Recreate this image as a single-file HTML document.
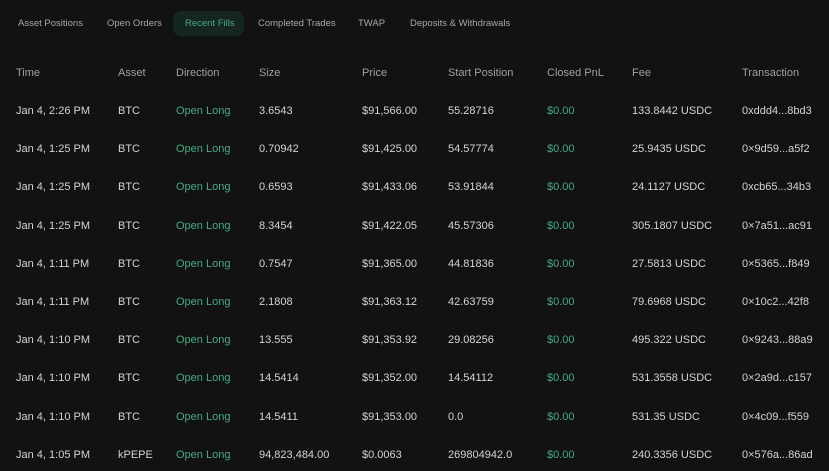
<!DOCTYPE html><html><head><style>
body{margin:0;width:829px;height:471px;background:#121212;font-family:"Liberation Sans",sans-serif;overflow:hidden;position:relative}
.t{position:absolute;font-size:9.5px;color:#a8a8a8;top:18px}
.pill{position:absolute;left:173px;top:11px;width:71px;height:25px;border-radius:8px;background:#15251f}
.c{position:absolute;font-size:11px;white-space:nowrap}
.h{color:#a0a0a0;top:67px}
.d{color:#d4d4d4}
.g{color:#4aaa82}
</style></head><body>
<div class="pill"></div>
<div class="t" style="left:18px">Asset Positions</div>
<div class="t" style="left:107px">Open Orders</div>
<div class="t" style="left:185px;color:#4aaa82">Recent Fills</div>
<div class="t" style="left:258px">Completed Trades</div>
<div class="t" style="left:358px">TWAP</div>
<div class="t" style="left:410px">Deposits &amp; Withdrawals</div>
<div id="r"></div>
<script>
var X=[16,118,176,259,362,448,547,632,742];
var H=["Time","Asset","Direction","Size","Price","Start Position","Closed PnL","Fee","Transaction"];
var R=[["Jan 4, 2:26 PM","BTC","3.6543","$91,566.00","55.28716","133.8442 USDC","0xddd4...8bd3"],
["Jan 4, 1:25 PM","BTC","0.70942","$91,425.00","54.57774","25.9435 USDC","0×9d59...a5f2"],
["Jan 4, 1:25 PM","BTC","0.6593","$91,433.06","53.91844","24.1127 USDC","0xcb65...34b3"],
["Jan 4, 1:25 PM","BTC","8.3454","$91,422.05","45.57306","305.1807 USDC","0×7a51...ac91"],
["Jan 4, 1:11 PM","BTC","0.7547","$91,365.00","44.81836","27.5813 USDC","0×5365...f849"],
["Jan 4, 1:11 PM","BTC","2.1808","$91,363.12","42.63759","79.6968 USDC","0×10c2...42f8"],
["Jan 4, 1:10 PM","BTC","13.555","$91,353.92","29.08256","495.322 USDC","0×9243...88a9"],
["Jan 4, 1:10 PM","BTC","14.5414","$91,352.00","14.54112","531.3558 USDC","0×2a9d...c157"],
["Jan 4, 1:10 PM","BTC","14.5411","$91,353.00","0.0","531.35 USDC","0×4c09...f559"],
["Jan 4, 1:05 PM","kPEPE","94,823,484.00","$0.0063","269804942.0","240.3356 USDC","0×576a...86ad"]];
var s="";
H.forEach(function(h,i){s+='<div class="c h" style="left:'+X[i]+'px">'+h+'</div>'});
R.forEach(function(r,j){var y=105+j*38.2;
var v=[r[0],r[1],"Open Long",r[2],r[3],r[4],"$0.00",r[5],r[6]];
v.forEach(function(t,i){s+='<div class="c '+((i==2||i==6)?'g':'d')+'" style="left:'+X[i]+'px;top:'+y+'px">'+t+'</div>'})});
document.getElementById("r").innerHTML=s;
</script></body></html>
